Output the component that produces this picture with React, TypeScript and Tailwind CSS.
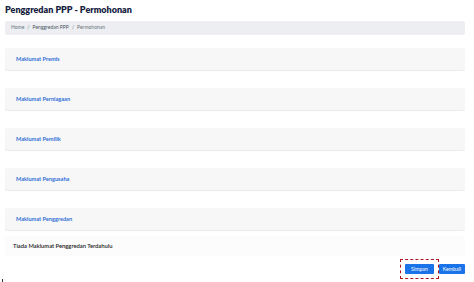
const sections = [
  "Maklumat Premis",
  "Maklumat Perniagaan",
  "Maklumat Pemilik",
  "Maklumat Pengusaha",
  "Maklumat Penggredan",
];

export default function App() {
  return (
    <div className="relative h-[282px] w-[474px] overflow-hidden bg-white font-['Lato',sans-serif]">
      <div className="pl-[5px] pr-[9px] pt-[4px]">
        {/* Header */}
        <h1 className="text-[9px] font-extrabold leading-[12px] text-[#15213f]">Penggredan PPP - Permohonan</h1>

        {/* Breadcrumb */}
        <div className="mt-[5px] flex h-[14px] items-center rounded-[2px] bg-[#eceef1] px-[6px] text-[5px] text-[#6b7280]">
          <span>Home</span>
          <span className="mx-[3px]">/</span>
          <span className="text-[#4b5563]">Penggredan PPP</span>
          <span className="mx-[3px]">/</span>
          <span>Permohonan</span>
        </div>

        {/* Sections */}
        <div className="mt-[13px] flex flex-col gap-[18px]">
          {sections.map((s) => (
            <div
              key={s}
              className="flex h-[22px] items-center rounded-[2px] bg-[#f7f7f8] px-[11px] shadow-[0_1px_1px_rgba(0,0,0,0.08)]"
            >
              <span className="text-[5.6px] font-bold text-[#2f6fd6]">{s}</span>
            </div>
          ))}
        </div>

        <div className="mt-[6px] flex h-[20px] items-center bg-[#fcfcfc] px-[8px]">
          <span className="text-[5.8px] font-semibold text-[#222]">Tiada Maklumat Penggredan Terdahulu</span>
        </div>

        {/* Actions */}
        <div className="mt-[3px] flex items-center justify-end">
          <div className="flex items-center rounded-[1px] border-[1.5px] border-dashed border-[#b3141b] p-[4px]">
            <button className="h-[10px] rounded-[1px] bg-[#1a73e8] px-[6px] text-[5.2px] leading-[10px] text-white">Simpan</button>
          </div>
          <button className="h-[10px] rounded-[1px] bg-[#1a73e8] px-[4px] text-[5.2px] leading-[10px] text-white">Kembali</button>
        </div>
      </div>
      <div className="absolute bottom-0 left-[2px] h-[3px] w-[1px] bg-[#333]" />
    </div>
  );
}
